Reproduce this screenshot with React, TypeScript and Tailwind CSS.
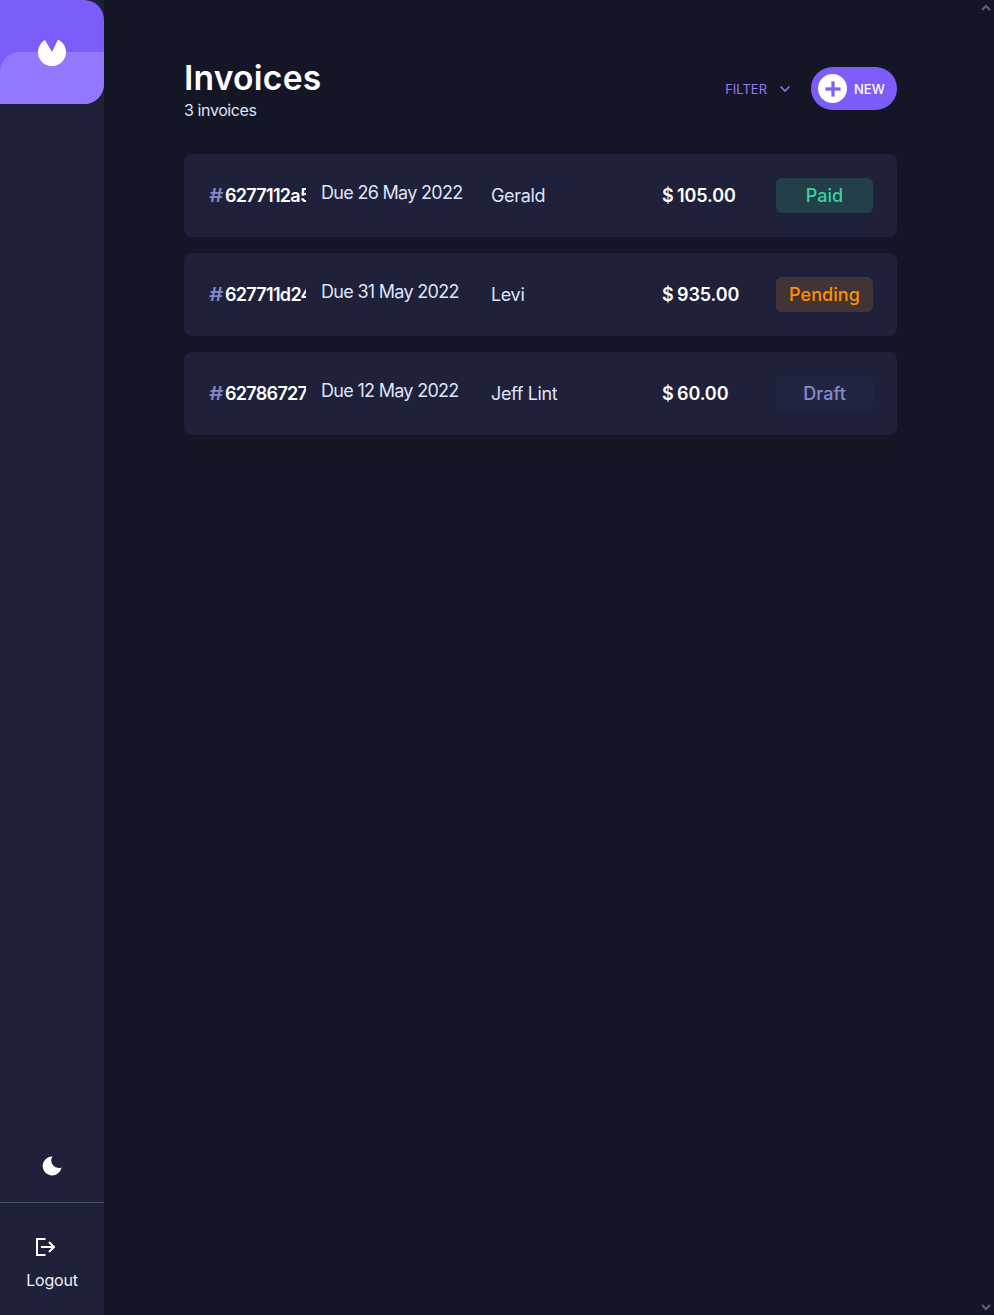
import React from "react";
import { ChevronDown, Plus } from "lucide-react";

const rows = [
  { id: "6277112a5", due: "Due 26 May 2022", name: "Gerald", amount: "105.00", status: "Paid", badge: "bg-[#233f4a] text-[#33d69f]" },
  { id: "627711d24", due: "Due 31 May 2022", name: "Levi", amount: "935.00", status: "Pending", badge: "bg-[#413434] text-[#ff8f00]" },
  { id: "62786727", due: "Due 12 May 2022", name: "Jeff Lint", amount: "60.00", status: "Draft", badge: "bg-[#222541] text-[#838dcb]" },
];

export default function App() {
  return (
    <div className="flex h-[1315px] w-[994px] overflow-hidden bg-[#141625] font-['Inter',sans-serif] text-white">
      <aside className="flex w-[104px] shrink-0 flex-col bg-[#1e2139]">
        <div className="relative h-[104px] overflow-hidden rounded-r-[20px] bg-[#7c5dfa]">
          <div className="absolute inset-x-0 bottom-0 h-[52px] rounded-tl-[20px] bg-[#9277ff]" />
          <svg className="absolute left-[38px] top-[38px]" width="28" height="28" viewBox="0 0 28 28">
            <path fill="#fff" d="M7 2 L14 14 L20 1.5 A14 14 0 1 1 7 2 Z" />
          </svg>
        </div>
        <div className="flex-1" />
        <div className="flex h-[98px] items-start justify-center pt-[52px]">
          <svg width="20" height="20" viewBox="0 0 20 20">
            <path fill="#fff" d="M10.5 0.5 A9.5 9.5 0 1 0 19.5 11.5 A7.5 7.5 0 0 1 10.5 0.5 Z" />
          </svg>
        </div>
        <div className="flex h-[113px] flex-col items-center border-t border-[#494e6e] pt-[35px]">
          <svg className="mr-[12px]" width="20" height="18" viewBox="0 0 20 18" fill="none" stroke="#fff" strokeWidth="2">
            <path d="M9.5 1 H1 V17 H9.5" />
            <path d="M5 9 H18" />
            <path d="M13 4 L18 9 L13 14" />
          </svg>
          <span className="mt-[14px] text-[16px] leading-[20px] tracking-[-0.2px] text-[#f0f1fb]">Logout</span>
        </div>
      </aside>

      <main className="flex-1 pl-[80px] pr-[82px] pt-[60px]">
        <header className="flex h-[61px] items-start justify-between">
          <div>
            <h1 className="text-[33.6px] font-semibold leading-[36px] tracking-[0.25px]">Invoices</h1>
            <p className="mt-[4px] text-[16px] leading-[20px] tracking-[-0.4px] text-[#dfe3fa]">3 invoices</p>
          </div>
          <div className="mt-[7px] flex items-center">
            <span className="text-[13px] leading-[16px] text-[#9277ff]">FILTER</span>
            <ChevronDown className="ml-[10px]" size={16} strokeWidth={2.5} color="#8e72fb" />
            <button className="ml-[18px] flex h-[43px] w-[86px] items-center rounded-full bg-[#7c5dfa] pl-[7px]">
              <span className="flex h-[29px] w-[29px] items-center justify-center rounded-full bg-white">
                <Plus size={26} strokeWidth={3} strokeLinecap="butt" color="#7c5dfa" />
              </span>
              <span className="ml-[7px] text-[13px] font-medium leading-[16px] text-white">NEW</span>
            </button>
          </div>
        </header>

        <ul className="mt-[33px] flex flex-col gap-[16px]">
          {rows.map((r) => (
            <li key={r.id} className="flex h-[83px] items-center rounded-[8px] bg-[#1e2139] pl-[25px] pr-[24px]">
              <div className="w-[97px] shrink-0 overflow-hidden whitespace-nowrap pt-[1px] text-[18px] font-semibold leading-[24px] tracking-[-0.7px]">
                <span className="inline-block w-[16px] origin-left scale-x-125 text-[#7e88c3]">#</span>{r.id}
              </div>
              <div className="ml-[15px] w-[170px] shrink-0 pb-[6px] text-[18px] leading-[24px] tracking-[-0.7px] text-[#dfe3fa]">{r.due}</div>
              <div className="w-[171px] shrink-0 pt-[1px] text-[18px] leading-[24px] tracking-[-0.35px] text-[#dfe3fa]">{r.name}</div>
              <div className="w-[114px] shrink-0 pt-[1px] text-[18px] font-semibold leading-[24px] tracking-[-0.1px] [word-spacing:-1px]">$ {r.amount}</div>
              <div className={`flex h-[35px] w-[97px] shrink-0 items-center justify-center rounded-[6px] text-[18px] font-medium tracking-[0.05px] ${r.badge}`}>{r.status}</div>
            </li>
          ))}
        </ul>
      </main>

      <div className="flex w-[15px] shrink-0 flex-col justify-between bg-[#141625] py-[4px] text-[#5f6070]">
        <svg className="ml-[2px]" width="10" height="7" viewBox="0 0 10 7"><path d="M1 6 L5 2 L9 6" fill="none" stroke="currentColor" strokeWidth="2" /></svg>
        <svg className="ml-[2px]" width="10" height="7" viewBox="0 0 10 7"><path d="M1 1 L5 5 L9 1" fill="none" stroke="currentColor" strokeWidth="2" /></svg>
      </div>
    </div>
  );
}
